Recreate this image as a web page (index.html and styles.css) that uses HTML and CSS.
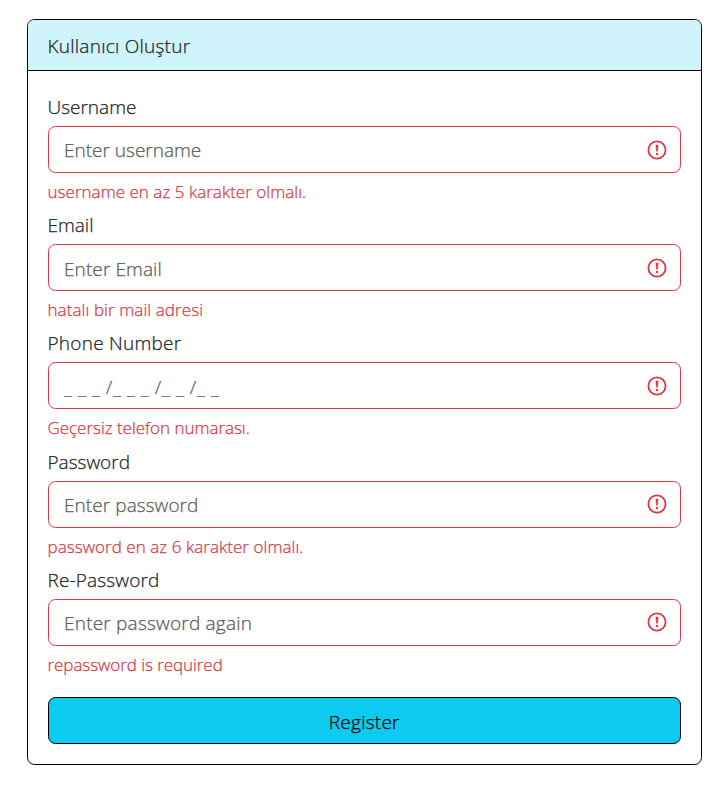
FILE: index.html
```html
<!DOCTYPE html>
<html lang="tr">
<head>
<meta charset="utf-8">
<title>Kullanıcı Oluştur</title>
<link rel="stylesheet" href="styles.css">
</head>
<body>
<svg width="0" height="0" class="defs"><symbol id="err" viewBox="0 0 20 20"><circle cx="10" cy="10" r="8.6" fill="none" stroke="#dc3545" stroke-width="1.8"/><path d="M8.9 5h2.2l-.5 6.2h-1.2z" fill="#dc3545" stroke="#dc3545" stroke-width=".5" stroke-linejoin="round"/><circle cx="10" cy="14" r="1.2" fill="#dc3545"/></symbol></svg>
<form class="card">
<div class="card-header"><span class="t-title">Kullanıcı Oluştur</span></div>
<div class="card-body">
<div class="group"><label for="username"><span class="t-username">Username</span></label><div class="control"><input id="username" type="text" class="t-p1" placeholder="Enter username"><svg class="icon"><use href="#err"/></svg></div><div class="feedback"><span class="t-f1">username en az 5 karakter olmalı.</span></div></div>
<div class="group"><label for="email"><span class="t-email">Email</span></label><div class="control"><input id="email" type="text" class="t-p2" placeholder="Enter Email"><svg class="icon"><use href="#err"/></svg></div><div class="feedback"><span class="t-f2">hatalı bir mail adresi</span></div></div>
<div class="group"><label for="phone"><span class="t-phone">Phone Number</span></label><div class="control"><input id="phone" type="text" class="t-p3" placeholder="_ _ _ /_ _ _ /_ _ /_ _"><svg class="icon"><use href="#err"/></svg></div><div class="feedback"><span class="t-f3">Geçersiz telefon numarası.</span></div></div>
<div class="group"><label for="password"><span class="t-pass">Password</span></label><div class="control"><input id="password" type="password" class="t-p4" placeholder="Enter password"><svg class="icon"><use href="#err"/></svg></div><div class="feedback"><span class="t-f4">password en az 6 karakter olmalı.</span></div></div>
<div class="group"><label for="repassword"><span class="t-repass">Re-Password</span></label><div class="control"><input id="repassword" type="password" class="t-p5" placeholder="Enter password again"><svg class="icon"><use href="#err"/></svg></div><div class="feedback"><span class="t-f5">repassword is required</span></div></div>
<button class="btn" type="button"><span class="t-reg">Register</span></button>
</div>
</form>
</body>
</html>
```
FILE: styles.css
```css
* { box-sizing: border-box; }
body { margin: 0; padding: 19px 25px 0 27px; background: #fff; color: #212529; font: 300 19px/30px "Open Sans", "Noto Sans", sans-serif; -webkit-text-stroke: .25px currentColor; }
.defs { display: block; height: 0; }
.card { height: 746px; border: 1px solid #000; border-radius: 7.5px; overflow: hidden; }
.card-header { height: 51px; padding: 11px 20px; background: #cff4fc; border-bottom: 1px solid #000; }
.card-body { padding: 21px 20px 20px; }
.group { height: 118.2px; }
label { display: block; height: 34px; }
.control { display: flex; align-items: center; height: 47px; padding: 0 13px 0 15px; border: 1px solid #dc3545; border-radius: 7.5px; }
input { flex: 1; min-width: 0; height: 30px; padding: 0; border: 0; outline: 0; background: transparent; color: #212529; font: inherit; }
.group + .group input { height: 32px; padding-top: 2px; }
input::placeholder { color: #595c5f; opacity: 1; -webkit-text-stroke: .25px #595c5f; }
.icon { flex: none; width: 20px; height: 20px; }
.feedback { padding-top: 5px; font-size: 17px; line-height: 27px; color: #dc3545; -webkit-text-stroke: .25px #dc3545; }
.btn { display: block; width: 100%; height: 47px; margin-top: 14.2px; padding: 2px 0 0; border: 1px solid #000; border-radius: 7.5px; background: #0dcaf0; color: #000; font: inherit; }
span { display: inline-block; margin-left: -.5px; white-space: pre; }
.t-title { letter-spacing: .25px; }
.t-phone { letter-spacing: .25px; }
.t-repass { letter-spacing: .16px; }
.t-reg { letter-spacing: .25px; }
.t-p2 { letter-spacing: .1px; }
.t-p3 { letter-spacing: .61px; }
.t-p4 { letter-spacing: .07px; }
.t-p5 { letter-spacing: .21px; }
.t-f1 { letter-spacing: .03px; }
.t-f2 { letter-spacing: .08px; }
.t-f3 { letter-spacing: -.03px; }
.t-f4 { letter-spacing: .05px; }
.t-f5 { letter-spacing: -.06px; }
```
